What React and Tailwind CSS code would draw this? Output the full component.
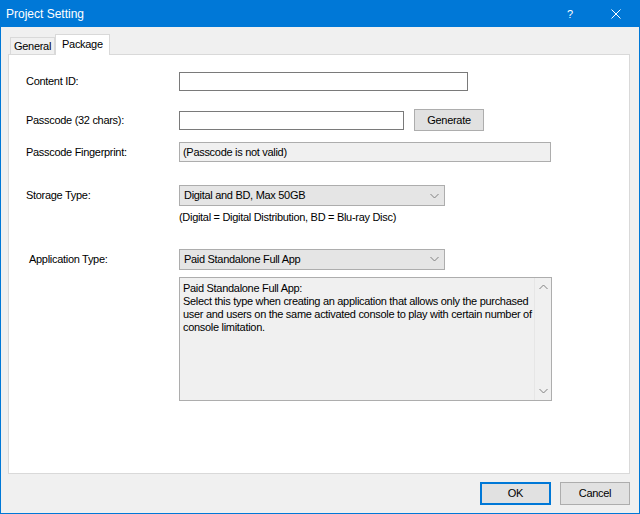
import React from "react";

const FONT = { fontFamily: '"Liberation Sans", Arial, sans-serif' };

function Chevron({ up }) {
  return (
    <svg width="9" height="6" viewBox="0 0 9 6" className="shrink-0">
      <polyline
        points={up ? "0.5,5 4.5,1 8.5,5" : "0.5,1 4.5,5 8.5,1"}
        fill="none"
        stroke="#808080"
        strokeWidth="1"
      />
    </svg>
  );
}

function Row({ label, labelClass = "", className = "", children }) {
  return (
    <div className={`flex items-center ${className}`}>
      <div className={`w-[153px] shrink-0 ${labelClass}`}>{label}</div>
      {children}
    </div>
  );
}

function Select({ value }) {
  return (
    <div className="w-[266px] h-[21px] flex items-center justify-between bg-[#e5e5e5] border border-[#adadad] pl-[4px] pr-[5px]">
      <span>{value}</span>
      <Chevron />
    </div>
  );
}

export default function App() {
  return (
    <div
      style={FONT}
      className="w-[640px] h-[514px] flex flex-col bg-[#f0f0f0] border border-[#0078d7] text-[11px] tracking-[-0.3px] text-black overflow-hidden"
    >
      {/* title bar */}
      <div className="h-[26px] shrink-0 bg-[#0078d7] text-white flex items-center pl-[5px]">
        <span className="text-[12px] tracking-normal flex-1">Project Setting</span>
        <span className="w-[46px] text-center text-[11px]">?</span>
        <span className="w-[46px] flex justify-center">
          <svg width="10" height="10" viewBox="0 0 10 10">
            <path d="M0.5 0.5 L9.5 9.5 M9.5 0.5 L0.5 9.5" stroke="white" strokeWidth="1" />
          </svg>
        </span>
      </div>

      <div className="flex-1 flex flex-col px-[7px] pt-[7px]">
        {/* tabs */}
        <div className="flex items-end h-[20px]">
          <div className="ml-[2px] h-[17px] px-[3px] border border-b-0 border-[#d9d9d9] bg-[#f0f0f0] flex items-center">
            General
          </div>
          <div className="relative z-10 -mb-px h-[21px] px-[6px] border border-b-0 border-[#d9d9d9] bg-white flex items-center pb-[2px]">
            Package
          </div>
        </div>

        {/* panel */}
        <div className="w-[622px] h-[420px] bg-white border border-[#d9d9d9] pl-[17px] pt-[17px]">
          <Row label="Content ID:">
            <div className="w-[289px] h-[19px] border border-[#7a7a7a] bg-white" />
          </Row>

          <Row label="Passcode (32 chars):" className="mt-[18px]">
            <div className="w-[225px] h-[19px] border border-[#7a7a7a] bg-white" />
            <button className="ml-[10px] w-[70px] h-[22px] bg-[#e1e1e1] border border-[#adadad]">
              Generate
            </button>
          </Row>

          <Row label="Passcode Fingerprint:" className="mt-[11px]">
            <div className="w-[372px] h-[20px] border border-[#adadad] bg-[#f0f0f0] flex items-center pl-[3px]">
              (Passcode is not valid)
            </div>
          </Row>

          <Row label="Storage Type:" className="mt-[23px]">
            <Select value="Digital and BD, Max 50GB" />
          </Row>
          <div className="ml-[153px] mt-[3px]">(Digital = Digital Distribution, BD = Blu-ray Disc)</div>

          <Row label="Application Type:" labelClass="pl-[3px]" className="mt-[23px]">
            <Select value="Paid Standalone Full App" />
          </Row>

          <div className="ml-[153px] mt-[7px] w-[373px] h-[124px] border border-[#adadad] bg-[#f0f0f0] flex">
            <div className="flex-1 pl-[3px] pt-[4px] leading-[13px]">
              Paid Standalone Full App:
              <br />
              Select this type when creating an application that allows only the purchased user and users on the same
              activated console to play with certain number of console limitation.
            </div>
            <div className="w-[17px] shrink-0 border-l border-[#e6e6e6] flex flex-col items-center justify-between py-[6px]">
              <Chevron up />
              <Chevron />
            </div>
          </div>
        </div>

        {/* footer */}
        <div className="flex justify-end gap-[9px] mt-[8px] w-[622px]">
          <button className="w-[71px] h-[23px] bg-[#e1e1e1] border-2 border-[#0078d7]">OK</button>
          <button className="w-[70px] h-[23px] bg-[#e1e1e1] border border-[#adadad]">Cancel</button>
        </div>
      </div>
    </div>
  );
}
